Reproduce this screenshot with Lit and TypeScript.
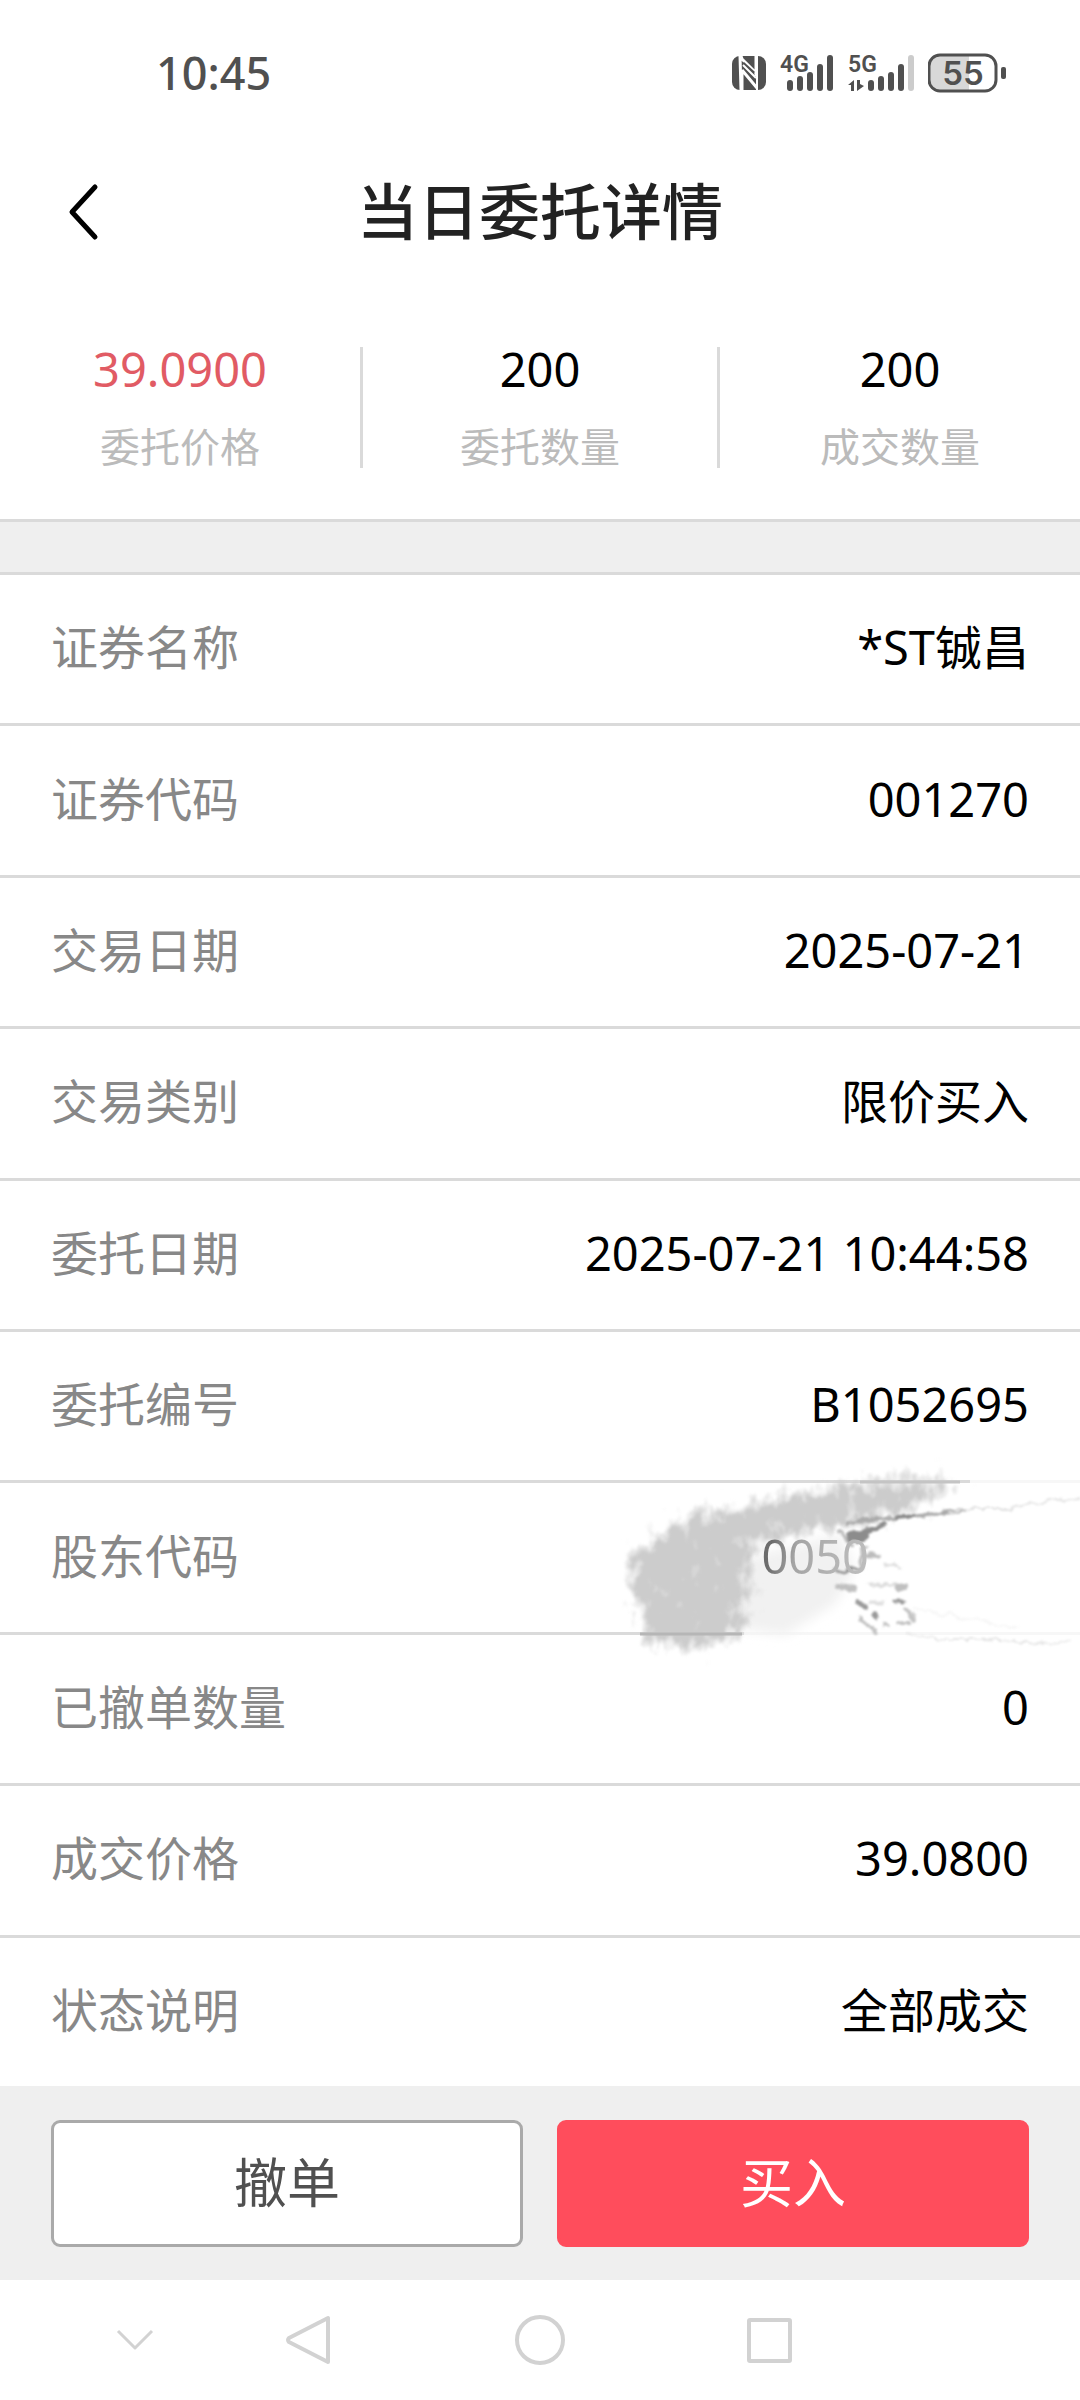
import { LitElement, html, css, svg } from "lit";
import { customElement, property } from "lit/decorators.js";
import { classMap } from "lit/directives/class-map.js";

interface Figure {
  value: string;
  label: string;
  accent?: boolean;
}

interface Detail {
  label: string;
  value: string;
  smudged?: boolean;
}

const FIGURES: Figure[] = [
  { value: "39.0900", label: "委托价格", accent: true },
  { value: "200", label: "委托数量" },
  { value: "200", label: "成交数量" },
];

const DETAILS: Detail[] = [
  { label: "证券名称", value: "*ST铖昌" },
  { label: "证券代码", value: "001270" },
  { label: "交易日期", value: "2025-07-21" },
  { label: "交易类别", value: "限价买入" },
  { label: "委托日期", value: "2025-07-21 10:44:58" },
  { label: "委托编号", value: "B1052695" },
  { label: "股东代码", value: "0050", smudged: true },
  { label: "已撤单数量", value: "0" },
  { label: "成交价格", value: "39.0800" },
  { label: "状态说明", value: "全部成交" },
];

@customElement("status-bar")
export class StatusBar extends LitElement {
  static styles = css`
    :host {
      display: flex;
      align-items: center;
      justify-content: space-between;
      height: 146px;
      padding: 0 74px 0 156px;
      color: #505050;
    }
    .clock {
      font-size: 45px;
      font-weight: 500;
      line-height: 48px;
    }
    .icons {
      display: flex;
      align-items: center;
      gap: 14px;
    }
    .icon {
      display: block;
      height: 60px;
    }
    .net {
      font: 600 23px "Roboto", "Liberation Sans", sans-serif;
    }
    .level {
      font: 600 33px "Inter", "Liberation Sans", sans-serif;
    }
  `;

  private bars(x: number, dim: boolean) {
    const tops = [27, 23, 19, 11, 2];
    return tops.map(
      (top, i) => svg`<line x1=${x + i * 10} x2=${x + i * 10} y1=${top + 3} y2="35"
        stroke=${dim && i === 4 ? "#cccccc" : "#505050"} stroke-width="6" stroke-linecap="round"/>`
    );
  }

  render() {
    return html`
      <time class="clock">10:45</time>
      <div class="icons">
        <svg class="icon" width="34" height="60" viewBox="0 -10 34 60" aria-hidden="true">
          <rect x="0" y="3" width="34" height="34" rx="8" fill="#505050" />
          <path d="M8 3L9 37M9 3L10 6L24 20M10 17L25 35M24 3V23M10 18V37" fill="none" stroke="#fff" stroke-width="3" />
          <path d="M11 10L22 20" fill="none" stroke="#505050" stroke-width="3" />
          <path d="M11 12L24 25M25 3V37" fill="none" stroke="#fff" stroke-width="2" />
        </svg>
        <svg class="icon" width="54" height="60" viewBox="0 -10 54 60" aria-hidden="true">
          <text class="net" x="0" y="19" fill="#505050">4G</text>
          ${this.bars(10, false)}
        </svg>
        <svg class="icon" width="66" height="60" viewBox="0 -10 66 60" aria-hidden="true">
          <text class="net" x="0" y="19" fill="#505050">5G</text>
          <path d="M0 32L6 27V38H3V32Z M9 27H12V31L16 33L9 38Z" fill="#505050" />
          ${this.bars(23, true)}
        </svg>
        <svg class="icon" width="78" height="60" viewBox="0 -10 78 60" aria-hidden="true">
          <rect x="1" y="2" width="67" height="36" rx="11" fill="#fff" />
          <path d="M41 2H12A11 11 0 0 0 1 13V27A11 11 0 0 0 12 38H41Z" fill="#d8d8d8" />
          <rect x="1" y="2" width="67" height="36" rx="11" fill="none" stroke="#505050" stroke-width="3" />
          <rect x="73" y="14" width="5" height="12" rx="2" fill="#505050" />
          <text class="level" x="35" y="32" text-anchor="middle" fill="#505050">55</text>
        </svg>
      </div>
    `;
  }
}

@customElement("order-figures")
export class OrderFigures extends LitElement {
  @property({ attribute: false }) figures: Figure[] = [];

  static styles = css`
    :host {
      display: grid;
      grid-template-columns: repeat(3, 1fr);
      padding: 67px 0 51px;
    }
    .figure {
      display: flex;
      flex-direction: column;
      align-items: center;
      gap: 36px;
      padding-bottom: 1px;
    }
    .figure:nth-child(2) {
      border: solid #dadada;
      border-width: 0 3px;
    }
    .value {
      font-size: 47px;
      line-height: 44px;
      color: #000;
    }
    .accent {
      color: #e15b64;
    }
    .label {
      font-size: 40px;
      line-height: 40px;
      color: #bbb;
    }
  `;

  render() {
    return this.figures.map(
      (f) => html`
        <div class="figure">
          <span class=${classMap({ value: true, accent: !!f.accent })}>${f.value}</span>
          <span class="label">${f.label}</span>
        </div>
      `
    );
  }
}

@customElement("brush-smudge")
export class BrushSmudge extends LitElement {
  static styles = css`
    :host {
      display: block;
      pointer-events: none;
    }
    .art {
      display: block;
    }
  `;

  render() {
    return html`
      <svg class="art" width="500" height="230" viewBox="0 0 500 230" aria-hidden="true">
        <defs>
          <filter id="fray" x="-20%" y="-20%" width="140%" height="140%" color-interpolation-filters="sRGB">
            <feGaussianBlur in="SourceGraphic" stdDeviation="9" result="b" />
            <feTurbulence type="fractalNoise" baseFrequency="0.09 0.06" numOctaves="4" seed="4" />
            <feColorMatrix values="0 0 0 0 0  0 0 0 0 0  0 0 0 0 0  2 0 0 0 -0.5" result="n" />
            <feComposite in="b" in2="n" operator="arithmetic" k1="0" k2="1.8" k3="1" k4="-1" />
            <feColorMatrix values="0 0 0 0 0.8  0 0 0 0 0.8  0 0 0 0 0.8  0 0 0 1 0" />
            <feGaussianBlur stdDeviation="1" />
          </filter>
          <filter id="speck" x="-20%" y="-20%" width="140%" height="140%" color-interpolation-filters="sRGB">
            <feTurbulence type="fractalNoise" baseFrequency="0.09" numOctaves="3" seed="9" result="n" />
            <feDisplacementMap in="SourceGraphic" in2="n" scale="10" xChannelSelector="R" yChannelSelector="G" />
            <feGaussianBlur stdDeviation="1" />
          </filter>
          <filter id="soft" x="-20%" y="-20%" width="140%" height="140%">
            <feGaussianBlur stdDeviation="6" />
          </filter>
          <linearGradient id="sweep" x1="50" y1="0" x2="400" y2="0" gradientUnits="userSpaceOnUse">
            <stop offset="0" stop-color="#ccc" />
            <stop offset="0.75" stop-color="#ccc" />
            <stop offset="1" stop-color="#ccc" stop-opacity="0.4" />
          </linearGradient>
        </defs>
        <path d="M164 184H500M390 33H500" stroke="#fff" stroke-width="5" opacity="0.8" />
        <path d="M160 110L260 85L275 120L255 155L205 186L160 180Z" fill="#f1f1f1" filter="url(#soft)" />
        <path d="M46 112L70 92L105 66L160 57L210 46L260 36L330 28L385 28L370 46L340 62L300 68L265 76L228 84L185 92L168 110L170 135L168 160L160 186L125 200L66 196L58 165L52 135Z" fill="url(#sweep)" filter="url(#fray)" />
        <path d="M60 185H162" stroke="#b6b6b6" stroke-width="3" />
        <path d="M280 33H380" stroke="#c4c4c4" stroke-width="3" />
        <g filter="url(#speck)" fill="none" stroke-linecap="round">
          <path d="M268 75L285 71L310 69L333 68L360 64L385 62" stroke="#aaa" stroke-width="4" />
          <path d="M318 68L334 67" stroke="#888" stroke-width="5" />
          <path d="M370 64L395 59L430 59L465 53L498 48" stroke="#e2e2e2" stroke-width="2" />
          <path d="M270 88L280 86L292 80L303 77M278 91L286 87" stroke="#8c8c8c" stroke-width="6" />
          <path d="M258 83L270 94M286 98L280 116M285 106L298 107" stroke="#bcbcbc" stroke-width="4" />
          <path d="M256 121L266 123L279 119" stroke="#999" stroke-width="4" />
          <path d="M306 116L320 118M290 135L318 136M290 154L304 155" stroke="#dedede" stroke-width="3" />
          <path d="M258 138L275 140M318 138H325" stroke="#c0c0c0" stroke-width="6" />
          <path d="M278 153L285 158M294 165L296 168M315 153L322 153" stroke="#999" stroke-width="5" />
          <path d="M280 168L287 176L296 182M304 176L308 177M320 173H330M326 160L334 170" stroke="#c4c4c4" stroke-width="4" />
          <path d="M325 184L360 190L405 190L460 194L490 193" stroke="#e6e6e6" stroke-width="2" />
          <path d="M335 161L390 170L440 180" stroke="#f6f6f6" stroke-width="2" />
        </g>
      </svg>
    `;
  }
}

@customElement("order-details")
export class OrderDetails extends LitElement {
  @property({ attribute: false }) details: Detail[] = [];

  static styles = css`
    :host {
      display: flex;
      flex-direction: column;
    }
    .list {
      flex: 1;
      display: grid;
      grid-auto-rows: 1fr;
      gap: 3px;
      margin: 0;
      background: #dadada;
    }
    .row {
      position: relative;
      display: flex;
      align-items: center;
      justify-content: space-between;
      min-height: 96px;
      padding: 0 51px 4px;
      background: #fff;
      font-size: 47px;
      line-height: 64px;
    }
    .label {
      color: #888;
    }
    .value {
      margin: 0;
      color: #000;
      text-align: right;
    }
    .smudged {
      z-index: 1;
    }
    .smudged .value {
      position: relative;
      z-index: 1;
      padding-right: 160px;
      background: linear-gradient(100deg, #6c6c6c 5%, #a4a4a4 14%, #b4b4b4 28%, #c4c4c4 50%);
      background-clip: text;
      -webkit-background-clip: text;
      color: transparent;
    }
    .smudge {
      position: absolute;
      right: 0;
      top: -34px;
    }
  `;

  render() {
    return html`
      <dl class="list">
        ${this.details.map(
          (d) => html`
            <div class=${classMap({ row: true, smudged: !!d.smudged })}>
              <dt class="label">${d.label}</dt>
              <dd class="value">${d.value}</dd>
              ${d.smudged ? html`<brush-smudge class="smudge"></brush-smudge>` : null}
            </div>
          `
        )}
      </dl>
    `;
  }
}

@customElement("system-nav")
export class SystemNav extends LitElement {
  static styles = css`
    :host {
      display: grid;
      grid-template-columns: 27fr 8fr 38fr 8fr 27fr;
      height: 120px;
    }
    .key {
      display: flex;
      align-items: center;
      justify-content: center;
      padding: 0;
      border: 0;
      background: none;
    }
    .glyph {
      fill: none;
      stroke: #d2d2d2;
      stroke-width: 4;
      stroke-linejoin: round;
    }
  `;

  render() {
    return html`
      <button class="key" aria-label="收起">
        <svg class="glyph" width="52" height="52" viewBox="0 0 52 52"><path d="M9 17L26 34L43 17" stroke-width="3" /></svg>
      </button>
      <button class="key" aria-label="返回">
        <svg class="glyph" width="52" height="52" viewBox="0 0 52 52"><path d="M44 4V48L5 28Q3 26 5 24Z" /></svg>
      </button>
      <button class="key" aria-label="主屏幕">
        <svg class="glyph" width="52" height="52" viewBox="0 0 52 52"><circle cx="26" cy="26" r="23" /></svg>
      </button>
      <button class="key" aria-label="最近任务">
        <svg class="glyph" width="52" height="52" viewBox="0 0 52 52"><rect x="5" y="6" width="41" height="41" rx="1" /></svg>
      </button>
    `;
  }
}

@customElement("app-root")
export class AppRoot extends LitElement {
  static styles = css`
    :host {
      display: flex;
      flex-direction: column;
      min-height: 100vh;
      background: #fff;
      font-family: "Noto Sans", "Noto Sans CJK SC", sans-serif;
    }
    .header {
      display: grid;
      grid-template-columns: 1fr auto 1fr;
      align-items: center;
      height: 132px;
      padding: 0 52px 2px;
    }
    .back {
      justify-self: start;
      padding: 8px 16px;
      border: 0;
      background: none;
    }
    .arrow {
      display: block;
    }
    .title {
      margin: 0;
      font-size: 61px;
      font-weight: 500;
      line-height: 64px;
      color: #222;
    }
    .band {
      height: 50px;
      border: solid #dadada;
      border-width: 3px 0;
      background: #efefef;
    }
    .details {
      flex: 1;
    }
    .actions {
      display: grid;
      grid-template-columns: 1fr 1fr;
      gap: 34px;
      padding: 34px 51px 33px;
      background: #efefef;
    }
    .action {
      height: 127px;
      padding: 0 0 2px;
      border: 3px solid #aaa;
      border-radius: 9px;
      background: #fff;
      color: #505050;
      font-family: inherit;
      font-size: 53px;
      line-height: 64px;
    }
    .buy {
      border-color: #ff4d5c;
      background: #ff4d5c;
      color: #fff;
    }
  `;

  render() {
    return html`
      <status-bar></status-bar>
      <header class="header">
        <button class="back" aria-label="返回">
          <svg class="arrow" width="32" height="58" viewBox="0 0 32 58" fill="none" stroke="#000" stroke-width="5" stroke-linecap="round" stroke-linejoin="round">
            <path d="M27 4L4 29L27 54" />
          </svg>
        </button>
        <h1 class="title">当日委托详情</h1>
      </header>
      <order-figures .figures=${FIGURES}></order-figures>
      <div class="band"></div>
      <order-details class="details" .details=${DETAILS}></order-details>
      <footer class="actions">
        <button class="action">撤单</button>
        <button class="action buy">买入</button>
      </footer>
      <system-nav></system-nav>
    `;
  }
}
